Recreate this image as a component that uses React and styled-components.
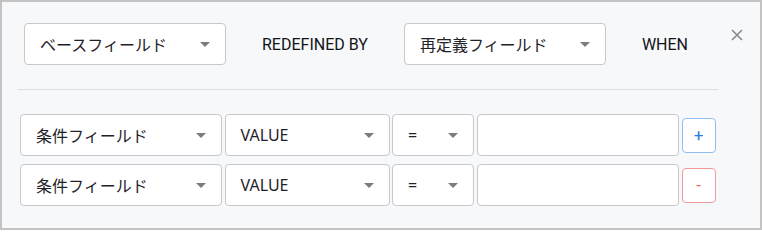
import React from "react";
import styled, { createGlobalStyle } from "styled-components";

const GlobalStyle = createGlobalStyle`
  html, body {
    margin: 0;
    padding: 0;
    background: #ffffff;
  }
  * {
    box-sizing: border-box;
  }
`;

const Frame = styled.div`
  position: relative;
  width: 762px;
  height: 230px;
  border: 2px solid #c3c3c3;
  background: #f7f8fa;
  font-family: Roboto, "Noto Sans CJK JP", sans-serif;
  color: #1f2329;
  padding: 21px 0 0 0;
`;

const HeadRow = styled.div`
  display: flex;
  align-items: center;
  gap: 36px;
  padding-left: 22px;
`;

const Label = styled.span`
  font-size: 16px;
  font-weight: 400;
  color: #111418;
  white-space: nowrap;
`;

const Close = styled.button`
  position: absolute;
  top: 25px;
  right: 15px;
  width: 16px;
  height: 16px;
  padding: 0;
  border: none;
  background: none;
  display: flex;
  align-items: center;
  justify-content: center;
  cursor: pointer;
`;

const Divider = styled.div`
  margin: 24px 0 24px 16px;
  width: 700px;
  height: 1px;
  background: #dcdfe3;
`;

const Rows = styled.div`
  display: flex;
  flex-direction: column;
  gap: 8px;
  padding-left: 18px;
`;

const Row = styled.div`
  display: flex;
  align-items: center;
  gap: 2.5px;
`;

const Select = styled.div`
  width: ${(p) => p.$w}px;
  height: 42px;
  flex: none;
  display: flex;
  align-items: center;
  justify-content: space-between;
  padding: 0 15px;
  background: #ffffff;
  border: 1px solid #c6c8cc;
  border-radius: 4px;
  font-family: "Noto Sans", "Noto Sans CJK JP", sans-serif;
  font-size: 16px;
  color: #1f2329;
  cursor: pointer;
`;

const Caret = styled.span`
  width: 0;
  height: 0;
  border-left: 5px solid transparent;
  border-right: 5px solid transparent;
  border-top: 5px solid #7c7c7c;
`;

const Input = styled.input`
  width: 202px;
  height: 42px;
  flex: none;
  background: #ffffff;
  border: 1px solid #c6c8cc;
  border-radius: 4px;
  outline: none;
`;

const ActionButton = styled.button`
  width: 34px;
  height: 35px;
  flex: none;
  margin-left: 0.5px;
  padding: 0;
  background: #ffffff;
  border: 1px solid ${(p) => (p.$danger ? "#f09a9a" : "#92bdf0")};
  border-radius: 4px;
  color: ${(p) => (p.$danger ? "#f06565" : "#2a7be4")};
  font-family: Roboto, sans-serif;
  font-size: 17px;
  line-height: 1;
  cursor: pointer;
`;

const Dropdown = ({ width, children }) => (
  <Select $w={width}>
    <span>{children}</span>
    <Caret />
  </Select>
);

const ConditionRow = ({ danger }) => (
  <Row>
    <Dropdown width={202}>条件フィールド</Dropdown>
    <Dropdown width={165}>VALUE</Dropdown>
    <Dropdown width={82}>=</Dropdown>
    <Input />
    <ActionButton $danger={danger}>{danger ? "-" : "+"}</ActionButton>
  </Row>
);

export default function App() {
  return (
    <>
      <GlobalStyle />
      <Frame>
        <HeadRow>
          <Dropdown width={202}>ベースフィールド</Dropdown>
          <Label>REDEFINED BY</Label>
          <Dropdown width={202}>再定義フィールド</Dropdown>
          <Label>WHEN</Label>
        </HeadRow>
        <Close aria-label="close">
          <svg width="12" height="12" viewBox="0 0 12 12">
            <path d="M1 1L11 11M11 1L1 11" stroke="#8a8a8a" strokeWidth="1.6" />
          </svg>
        </Close>
        <Divider />
        <Rows>
          <ConditionRow />
          <ConditionRow danger />
        </Rows>
      </Frame>
    </>
  );
}
